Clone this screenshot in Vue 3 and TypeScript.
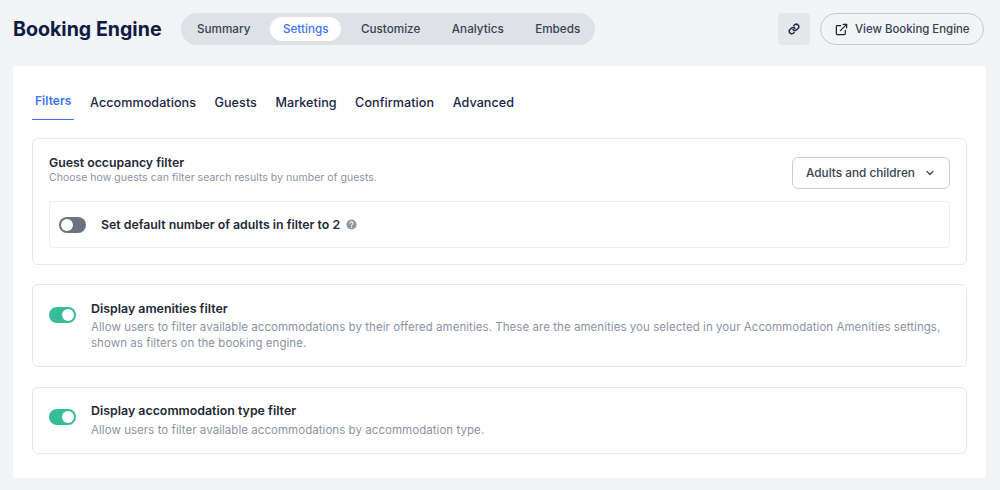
<template>
  <div class="page">
    <header class="top">
      <h1 class="title">Booking Engine</h1>
      <nav class="pill-nav">
        <span v-for="item in navItems" :key="item" class="pill" :class="{ active: item === 'Settings' }">{{ item }}</span>
      </nav>
      <button class="link-btn" type="button" aria-label="Copy link">
        <svg width="12" height="12" viewBox="0 0 24 24" fill="none" stroke="#1e2a52" stroke-width="3" stroke-linecap="round" stroke-linejoin="round">
          <path d="M10 13a5 5 0 0 0 7.5.5l3-3a5 5 0 0 0-7-7l-1.7 1.7" />
          <path d="M14 11a5 5 0 0 0-7.5-.5l-3 3a5 5 0 0 0 7 7l1.7-1.7" />
        </svg>
      </button>
      <button class="view-btn" type="button">
        <svg width="13" height="13" viewBox="0 0 24 24" fill="none" stroke="#1f2937" stroke-width="2.3" stroke-linecap="round" stroke-linejoin="round">
          <path d="M19 13.500V20a1.500 1.500 0 0 1-1.500 1.500H4A1.500 1.500 0 0 1 2.500 20V6.500A1.500 1.500 0 0 1 4 5h6.500" />
          <path d="M15 2.500h6.500V9" />
          <path d="M10 14 21.500 2.500" />
        </svg>
        View Booking Engine
      </button>
    </header>

    <main class="card">
      <div class="tabs">
        <span v-for="tab in tabs" :key="tab" class="tab" :class="{ active: tab === 'Filters' }">{{ tab }}</span>
      </div>

      <section class="box occupancy">
        <div class="occupancy-head">
          <div>
            <div class="box-title">Guest occupancy filter</div>
            <div class="box-sub small">Choose how guests can filter search results by number of guests.</div>
          </div>
          <div class="select">
            Adults and children
            <svg width="10" height="10" viewBox="0 0 10 10" fill="none" stroke="#374151" stroke-width="1.2" stroke-linecap="round" stroke-linejoin="round">
              <path d="M2 3.500 5 6.500l3-3" />
            </svg>
          </div>
        </div>
        <div class="inner">
          <span class="toggle off"><i /></span>
          <span class="inner-label">Set default number of adults in filter to 2</span>
          <svg class="help" width="11" height="11" viewBox="0 0 12 12">
            <circle cx="6" cy="6" r="5.500" fill="#92969e" />
            <path d="M4.400 4.700a1.600 1.600 0 1 1 2.400 1.400c-.5.300-.8.500-.8 1.100" fill="none" stroke="#fff" stroke-width="1.100" stroke-linecap="round" />
            <circle cx="6" cy="9" r=".7" fill="#fff" />
          </svg>
        </div>
      </section>

      <section v-for="row in rows" :key="row.title" class="box row">
        <span class="toggle on"><i /></span>
        <div>
          <div class="box-title">{{ row.title }}</div>
          <div class="box-sub">{{ row.text }}</div>
        </div>
      </section>
    </main>
  </div>
</template>

<script setup lang="ts">
const navItems = ['Summary', 'Settings', 'Customize', 'Analytics', 'Embeds']
const tabs = ['Filters', 'Accommodations', 'Guests', 'Marketing', 'Confirmation', 'Advanced']

const rows = [
  {
    title: 'Display amenities filter',
    text: 'Allow users to filter available accommodations by their offered amenities. These are the amenities you selected in your Accommodation Amenities settings, shown as filters on the booking engine.',
  },
  {
    title: 'Display accommodation type filter',
    text: 'Allow users to filter available accommodations by accommodation type.',
  },
]
</script>

<style>
html,
body {
  margin: 0;
  background: #f3f4f6;
}
</style>

<style scoped>
.page {
  width: 1000px;
  height: 490px;
  overflow: hidden;
  box-sizing: border-box;
  padding: 13px 14px 0 13px;
  background: #f3f4f6;
  font-family: Inter, "Open Sans", sans-serif;
  color: #111827;
}

.top {
  display: flex;
  align-items: center;
  height: 32px;
}

.title {
  margin: 0 19px 0 0;
  flex: none;
  width: 149px;
  font-size: 19.6px;
  font-weight: 700;
  white-space: nowrap;
  color: #0f1a45;
}

.pill-nav {
  display: flex;
  align-items: center;
  gap: 7.5px;
  box-sizing: border-box;
  width: 414px;
  height: 32px;
  padding: 0 4px;
  border-radius: 16px;
  background: #dee1e6;
}

.pill {
  height: 24px;
  padding: 0 12px;
  border-radius: 12px;
  font-size: 11.7px;
  font-weight: 500;
  line-height: 24px;
  color: #374151;
}

.pill.active {
  padding: 0 13px;
  background: #fff;
  color: #3f72f5;
}

.link-btn {
  display: flex;
  align-items: center;
  justify-content: center;
  width: 32px;
  height: 32px;
  margin-left: auto;
  padding: 0;
  border: 0;
  border-radius: 4px;
  background: #e5e7eb;
}

.view-btn {
  display: flex;
  align-items: center;
  gap: 7px;
  box-sizing: border-box;
  flex: none;
  width: 164px;
  height: 32px;
  margin: 0 2px 0 10px;
  padding: 0 14px;
  border: 1px solid #c3c8d2;
  border-radius: 16px;
  background: transparent;
  font: inherit;
  font-size: 11.4px;
  font-weight: 500;
  white-space: nowrap;
  color: #374151;
}

.view-btn svg {
  flex: none;
}

.card {
  box-sizing: border-box;
  height: 412px;
  margin-top: 21px;
  padding: 24px 19px 0;
  border-radius: 4px;
  background: #fff;
}

.tabs {
  display: flex;
  height: 30px;
  margin-bottom: 18px;
}

.tab {
  padding: 0 3px;
  margin-right: 12.5px;
  font-size: 12.6px;
  font-weight: 500;
  line-height: 26px;
  letter-spacing: 0.05px;
  color: #1a2547;
}

.tab.active {
  box-sizing: border-box;
  width: 42px;
  margin-right: 13px;
  border-bottom: 1px solid #3f72f5;
  color: #3f72f5;
  font-size: 12px;
  font-weight: 600;
  line-height: 22px;
}

.box {
  box-sizing: border-box;
  border: 1px solid #e5e7eb;
  border-radius: 6px;
}

.occupancy {
  height: 127px;
  margin-bottom: 19px;
  padding: 18px 16px;
}

.occupancy-head {
  display: flex;
  justify-content: space-between;
  height: 44px;
}

.occupancy-head .box-title {
  margin-top: -3px;
  font-size: 12.3px;
}

.box-title {
  font-size: 12.4px;
  font-weight: 600;
  line-height: 18px;
  color: #1f2937;
}

.box-sub {
  margin-top: 2px;
  font-size: 11.5px;
  line-height: 16px;
  letter-spacing: 0.05px;
  color: #8b93a3;
}

.box-sub.small {
  margin-top: 0;
  font-size: 10.5px;
  line-height: 12px;
  letter-spacing: 0.03px;
}

.select {
  display: flex;
  align-items: center;
  justify-content: space-between;
  box-sizing: border-box;
  width: 158px;
  height: 32px;
  padding: 0 14px 0 13px;
  border: 1px solid #c9cdd6;
  border-radius: 6px;
  font-size: 11.8px;
  font-weight: 500;
  color: #374151;
}

.inner {
  display: flex;
  align-items: center;
  box-sizing: border-box;
  height: 47px;
  padding: 0 9px;
  border: 1px solid #eceef1;
  border-radius: 4px;
}

.inner-label {
  margin-left: 15px;
  font-size: 12.3px;
  font-weight: 600;
  color: #1f2937;
}

.help {
  margin-left: 6px;
}

.toggle {
  position: relative;
  flex: none;
  display: block;
  width: 27px;
  height: 16px;
  border-radius: 8px;
}

.toggle i {
  position: absolute;
  top: 2px;
  width: 12px;
  height: 12px;
  border-radius: 50%;
  background: #fff;
}

.toggle.off {
  background: #6b7280;
}

.toggle.off i {
  left: 2px;
}

.toggle.on {
  background: #34bd96;
}

.toggle.on i {
  right: 2px;
}

.row {
  display: flex;
  gap: 15px;
  padding: 14px 16px;
  margin-bottom: 20px;
}

.row .toggle {
  margin-top: 7px;
}

.row:nth-of-type(2) {
  height: 83px;
  padding-top: 15px;
}

.row:nth-of-type(2) .box-sub {
  margin-top: 1px;
}

.row:nth-of-type(3) {
  height: 67px;
}
</style>
